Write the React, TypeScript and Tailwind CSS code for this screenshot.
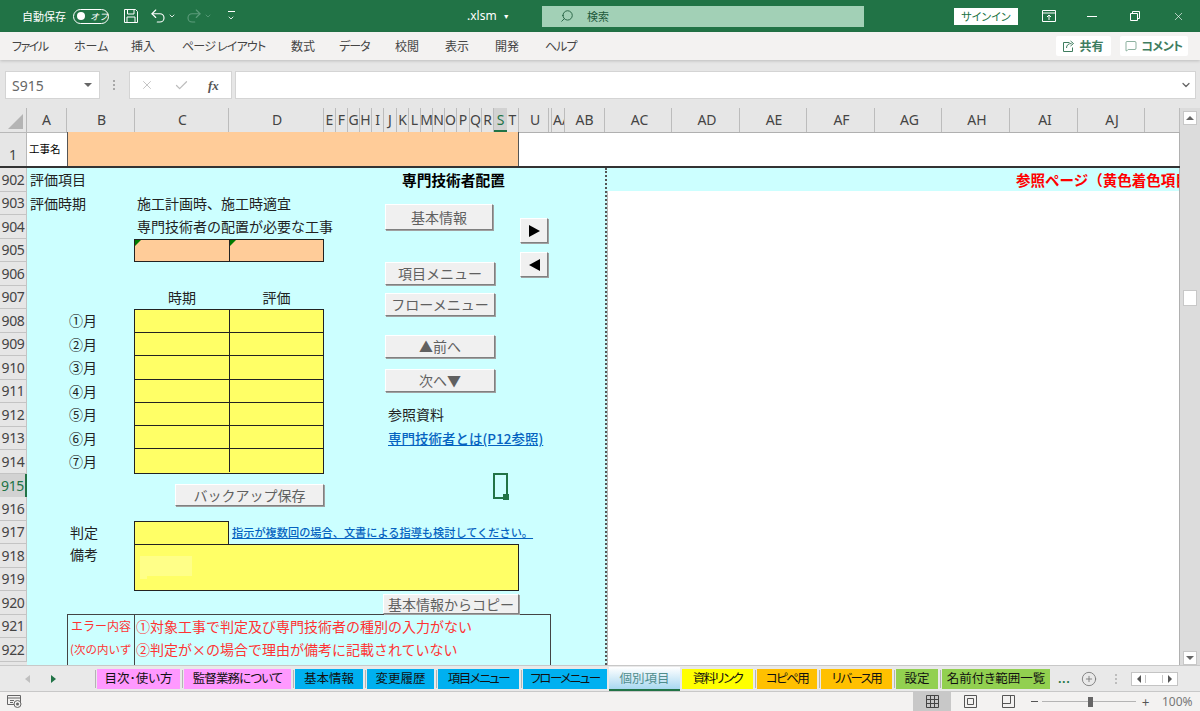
import { ChevronDown, Check, X, Search, Undo2, Redo2, CirclePlus, MessageSquare } from "lucide-react";

const ribbonTabs = [
  { label: "ファイル", w: "w-[62px] tracking-[-1.5px]" },
  { label: "ホーム", w: "w-[57px]" },
  { label: "挿入", w: "w-[51px]" },
  { label: "ページ レイアウト", w: "w-[109px] tracking-[-0.8px]" },
  { label: "数式", w: "w-[48px]" },
  { label: "データ", w: "w-[56px] tracking-[-1px]" },
  { label: "校閲", w: "w-[50px]" },
  { label: "表示", w: "w-[50px]" },
  { label: "開発", w: "w-[50px]" },
  { label: "ヘルプ", w: "w-[40px] tracking-[-1px]" },
];

const columns = [
  { label: "A", w: "w-[40px]" },
  { label: "B", w: "w-[68px] pl-[2px]" },
  { label: "C", w: "w-[94px] pl-[2px]" },
  { label: "D", w: "w-[95px] pl-[2px]" },
  { label: "E", w: "w-[12px]" },
  { label: "F", w: "w-[12px]" },
  { label: "G", w: "w-[12px]" },
  { label: "H", w: "w-[12px]" },
  { label: "I", w: "w-[12px]" },
  { label: "J", w: "w-[13px]" },
  { label: "K", w: "w-[12px]" },
  { label: "L", w: "w-[12px]" },
  { label: "M", w: "w-[12px]" },
  { label: "N", w: "w-[12px]" },
  { label: "O", w: "w-[12px]" },
  { label: "P", w: "w-[13px]" },
  { label: "Q", w: "w-[12px]" },
  { label: "R", w: "w-[12px]" },
  { label: "S", w: "w-[13px]" },
  { label: "T", w: "w-[12px]" },
  { label: "U", w: "w-[30px] pl-[3px]" },
  { label: "", w: "w-[3px]" },
  { label: "AA", w: "w-[13px]" },
  { label: "AB", w: "w-[40px]" },
  { label: "AC", w: "w-[67px] pl-[3px]" },
  { label: "AD", w: "w-[68px] pl-[3px]" },
  { label: "AE", w: "w-[67px] pl-[2px]" },
  { label: "AF", w: "w-[68px] pl-[2px]" },
  { label: "AG", w: "w-[67px] pl-[3px]" },
  { label: "AH", w: "w-[68px] pl-[3px]" },
  { label: "AI", w: "w-[68px] pl-[3px]" },
  { label: "AJ", w: "w-[67px] pl-[2px]" },
  { label: "", w: "w-[35px]" },
];

const rowNumbers = Array.from({ length: 21 }, (_, i) => 902 + i);
const months = ["①月", "②月", "③月", "④月", "⑤月", "⑥月", "⑦月"];

const tabs = [
  { label: "目次･使い方", cls: "w-[83px] bg-[#ff99ff]" },
  { label: "監督業務について", cls: "w-[107px] bg-[#ff99ff] tracking-[-0.9px]" },
  { label: "基本情報", cls: "w-[68px] bg-[#00b0f0]" },
  { label: "変更履歴", cls: "w-[67px] bg-[#00b0f0]" },
  { label: "項目メニュー", cls: "w-[81px] bg-[#00b0f0] tracking-[-1.5px]" },
  { label: "フローメニュー", cls: "w-[84px] bg-[#00b0f0] tracking-[-1.5px]" },
];
const tabsAfter = [
  { label: "資料リンク", cls: "w-[71px] bg-[#ffff00] tracking-[-1.6px]" },
  { label: "コピペ用", cls: "w-[60px] bg-[#ffc000] tracking-[-1.6px]" },
  { label: "リバース用", cls: "w-[71px] bg-[#ffc000] tracking-[-1.6px]" },
  { label: "設定", cls: "w-[42px] bg-[#92d050]" },
  { label: "名前付き範囲一覧", cls: "w-[108px] bg-[#92d050]" },
];

const sheetBtn =
  "absolute flex items-center justify-center bg-[#f0f0f0] border border-t-white border-l-white border-r-[#808080] border-b-[#808080] shadow-[1px_1px_0_#a0a0a0] text-[14px] text-[#606060] whitespace-nowrap";

function TitleBar() {
  return (
    <div className="flex h-[32px] shrink-0 items-center bg-[#217346] text-white">
      <span className="ml-[22px] w-[44px] text-[11px] whitespace-nowrap [font-feature-settings:'palt']">自動保存</span>
      <div className="ml-[7px] flex h-[15px] w-[36px] items-center rounded-full border border-white pl-[3px]">
        <span className="h-[8px] w-[8px] rounded-full bg-white" />
        <span className="ml-[5px] text-[9px] italic leading-none">オフ</span>
      </div>
      <svg className="ml-[14px]" width="16" height="16" viewBox="0 0 16 16" fill="none" stroke="white" strokeWidth="1">
        <path d="M1.5 1.5h11l2 2v11h-13z" />
        <path d="M4.5 1.5v4.5h6.5v-4.5" />
        <path d="M4 14.5v-5.5h8v5.5" />
      </svg>
      <Undo2 className="ml-[10px]" size={18} strokeWidth={1.5} />
      <ChevronDown className="ml-[1px]" size={8} strokeWidth={2.5} />
      <Redo2 className="ml-[9px] text-[#5c9c7b]" size={18} strokeWidth={1.5} />
      <ChevronDown className="ml-[1px] text-[#5c9c7b]" size={8} strokeWidth={2.5} />
      <div className="ml-[15px] flex w-[8px] flex-col items-center">
        <span className="mb-[2px] h-px w-[7px] bg-white" />
        <ChevronDown size={8} strokeWidth={2.5} />
      </div>
      <span className="ml-[232px] w-[75px] text-[12px] whitespace-nowrap font-['Noto_Sans',sans-serif]">
        .xlsm
        <span className="ml-[6px] text-[7px] align-[1px]">▼</span>
      </span>
      <div className="flex h-[21px] w-[322px] items-center bg-[#a2d0b6] text-[#1e5a3c]">
        <Search className="ml-[18px] -scale-x-100" size={14} strokeWidth={1.5} />
        <span className="ml-[13px] text-[11px]">検索</span>
      </div>
      <div className="ml-[90px] flex h-[17px] w-[64px] items-center justify-center bg-white text-[11px] text-[#217346] [font-feature-settings:'palt']">
        サインイン
      </div>
      <svg className="ml-[24px]" width="14" height="12" viewBox="0 0 14 12" fill="none" stroke="white" strokeWidth="1">
        <path d="M.5 .5h13v11h-13z" />
        <path d="M.5 3h13" />
        <path d="M7 10v-5M5 7l2-2 2 2" />
      </svg>
      <span className="ml-[31px] h-px w-[10px] bg-white" />
      <svg className="ml-[33px]" width="10" height="10" viewBox="0 0 10 10" fill="none" stroke="white" strokeWidth="1">
        <path d="M.5 2.5h7v7h-7z" />
        <path d="M2.5 2.5v-2h7v7h-2" />
      </svg>
      <X className="ml-[32px]" size={13} strokeWidth={1.2} />
    </div>
  );
}

function RibbonTabs() {
  return (
    <div className="relative z-10 flex h-[28px] shrink-0 items-center bg-[#f3f2f1] pl-[12px] shadow-[0_1px_3px_rgba(0,0,0,0.18)]">
      {ribbonTabs.map((tab) => (
        <span key={tab.label} className={`${tab.w} text-[12px] text-[#444] whitespace-pre [font-feature-settings:'palt']`}>
          {tab.label}
        </span>
      ))}
      <div className="ml-auto flex items-center gap-[9px] pr-[12px]">
        <div className="flex h-[20px] w-[55px] items-center justify-center gap-[4px] rounded-[2px] bg-white text-[12px] font-bold text-[#3f7d5f]">
          <svg width="12" height="12" viewBox="0 0 12 12" fill="none" stroke="#3f7d5f" strokeWidth="1">
            <path d="M6.5 2.5h-6v9h9v-4" />
            <path d="M3.5 8c0-3 2-4.500 5-4.500M7.500 1l3 2.500-3 2.500" />
          </svg>
          共有
        </div>
        <div className="flex h-[20px] w-[68px] items-center justify-center gap-[4px] rounded-[2px] bg-white text-[12px] font-bold tracking-[-0.5px] text-[#3f7d5f] [font-feature-settings:'palt']">
          <MessageSquare size={12} strokeWidth={1.2} />
          コメント
        </div>
      </div>
    </div>
  );
}

function FormulaBar() {
  return (
    <div className="flex h-[48px] shrink-0 items-center bg-[#e6e6e6] pl-[5px] pt-[2px]">
      <div className="flex h-[28px] w-[95px] items-center justify-between border border-[#d4d4d4] bg-white pl-[6px] pr-[7px] font-['Noto_Sans',sans-serif] text-[14px] text-[#666]">
        S915
        <span className="h-0 w-0 border-x-[4px] border-t-[4px] border-x-transparent border-t-[#666]" />
      </div>
      <div className="ml-[13px] flex w-[3px] flex-col gap-[2px]">
        <span className="h-[2px] w-[2px] bg-[#a8a8a8]" />
        <span className="h-[2px] w-[2px] bg-[#a8a8a8]" />
        <span className="h-[2px] w-[2px] bg-[#a8a8a8]" />
      </div>
      <div className="ml-[13px] flex h-[28px] w-[103px] items-center border border-[#d4d4d4] bg-white text-[#bdbdbd]">
        <X className="ml-[10px]" size={14} strokeWidth={1.5} />
        <Check className="ml-[20px]" size={15} strokeWidth={2} />
        <span className="ml-[19px] font-['Liberation_Serif',serif] text-[13px] font-bold italic leading-none text-[#555]">fx</span>
      </div>
      <div className="ml-[3px] flex h-[28px] w-[961px] items-center justify-end border border-[#d4d4d4] bg-white pr-[3px]">
        <ChevronDown className="text-[#666]" size={12} strokeWidth={2.5} />
      </div>
    </div>
  );
}

function ColumnHeaders() {
  return (
    <div className="flex h-[24px] bg-[#e6e6e6] font-['Noto_Sans',sans-serif] text-[14px] leading-[24px] text-[#444]">
      <div className="flex w-[27px] items-end justify-end border-r border-[#b8b8b8] pb-[3px] pr-[3px]">
        <span className="h-0 w-0 border-b-[15px] border-l-[15px] border-b-[#b4b4b4] border-l-transparent" />
      </div>
      {columns.map((col, i) =>
        col.label === "S" ? (
          <div key={i} className={`${col.w} flex justify-center border-b-2 border-[#217346] bg-[#d2d2d2] text-[#217346]`}>
            {col.label}
          </div>
        ) : col.label === "AA" ? (
          <div key={i} className={`${col.w} overflow-hidden whitespace-nowrap border-r border-[#bcbcbc] pl-[1px]`}>
            {col.label}
          </div>
        ) : (
          <div key={i} className={`${col.w} flex justify-center border-r border-[#bcbcbc]`}>
            {col.label}
          </div>
        ),
      )}
    </div>
  );
}

function RowOne() {
  return (
    <div className="flex h-[36px] border-b-2 border-b-[#333]">
      <div className="flex w-[27px] items-end justify-center border-r border-t border-[#b8b8b8] bg-[#e6e6e6] font-['Noto_Sans',sans-serif] text-[14px] leading-[22px] text-[#444]">
        1
      </div>
      <div className="flex w-[40px] items-center border-t border-[#b8b8b8] bg-white pb-[2px] pl-[2px] text-[10.5px] text-black">工事名</div>
      <div className="w-[452px] border-x border-[#555] bg-[#ffcc99]" />
      <div className="w-[661px] border-r border-t border-[#b0b0b0] bg-white" />
    </div>
  );
}

function RowHeaders() {
  return (
    <div className="h-[497px] w-[27px] shrink-0 overflow-hidden bg-[#e6e6e6] font-['Noto_Sans',sans-serif] text-[14px] tracking-[-0.3px] text-[#444]">
      {rowNumbers.map((n) =>
        n === 915 ? (
          <div key={n} className="flex h-[23.5px] items-center justify-center border-r-2 border-[#217346] bg-[#d2d2d2] text-[#217346]">
            {n}
          </div>
        ) : (
          <div key={n} className="flex h-[23.5px] items-center justify-center border-b border-r border-[#c4c4c4]">
            {n}
          </div>
        ),
      )}
    </div>
  );
}

function MainPane() {
  return (
    <div className="relative h-[497px] w-[580px] shrink-0 overflow-hidden border-r-2 border-dotted border-[#555] bg-[#ccffff] text-[14px] text-[#222]">
      <div className="grid grid-cols-[40px_68px_94px_95px_195px_32px_54px] grid-rows-[repeat(22,23.5px)] whitespace-nowrap">
        <div className="col-start-1 row-start-1 flex items-center pl-[3px]">評価項目</div>
        <div className="col-start-5 row-start-1 flex items-center pl-[78px] text-[14.7px] font-bold text-black">専門技術者配置</div>
        <div className="col-start-1 row-start-2 flex items-center pl-[3px]">評価時期</div>
        <div className="col-start-3 col-span-2 row-start-2 flex items-center pl-[2px]">施工計画時、施工時適宜</div>
        <div className="col-start-3 col-span-3 row-start-3 flex items-center pl-[2px]">専門技術者の配置が必要な工事</div>

        <div className="col-start-3 col-span-2 row-start-4 -ml-px grid grid-cols-[95px_1fr] border border-[#222] bg-[#ffcc99]">
          <div className="border-r border-[#222]">
            <div className="h-0 w-0 border-r-[6px] border-t-[6px] border-r-transparent border-t-[#007a00]" />
          </div>
          <div>
            <div className="h-0 w-0 border-r-[6px] border-t-[6px] border-r-transparent border-t-[#007a00]" />
          </div>
        </div>

        <div className="col-start-3 row-start-6 flex items-center justify-center">時期</div>
        <div className="col-start-4 row-start-6 flex items-center justify-center">評価</div>

        <div className="col-start-2 row-start-7 row-span-7 flex flex-col">
          {months.map((m) => (
            <div key={m} className="flex h-[23.5px] items-center pl-[2px]">
              {m}
            </div>
          ))}
        </div>
        <div className="col-start-3 col-span-2 row-start-7 row-span-7 -ml-px grid grid-cols-[95px_1fr] grid-rows-7 border border-[#222] bg-[#ffff66]">
          {months.map((m, i) => (
            <div key={m} className="contents">
              <div className={`border-r border-[#222] ${i < 6 ? "border-b" : ""}`} />
              <div className={`border-[#222] ${i < 6 ? "border-b" : ""}`} />
            </div>
          ))}
        </div>

        <div className="col-start-5 col-span-2 row-start-11 flex items-center pl-[64px]">参照資料</div>
        <div className="col-start-5 col-span-3 row-start-12 flex items-center pl-[64px] text-[13.5px] font-medium text-[#0563c1] underline">
          専門技術者とは(P12参照)
        </div>

        <div className="col-start-2 row-start-16 flex items-center pl-[3px]">判定</div>
        <div className="col-start-3 row-start-16 -ml-px border border-b-0 border-[#222] bg-[#ffff66]" />
        <div className="col-start-4 col-span-3 row-start-16 flex items-center pl-[3px] text-[11.2px] font-medium text-[#0563c1] underline">
          指示が複数回の場合、文書による指導も検討してください。
        </div>
        <div className="col-start-2 row-start-17 flex items-start pl-[3px]">備考</div>
        <div className="relative col-start-3 col-span-3 row-start-17 row-span-2 -ml-px border border-[#222] bg-[#ffff66]">
          <span className="absolute left-[5px] top-[11px] h-[20px] w-[52px] bg-[#ffff88]" />
          <span className="absolute left-[5px] top-[31px] h-[3px] w-[7px] bg-[#ffff88]" />
        </div>

        <div className="col-start-2 col-span-5 row-start-20 row-span-3 -mt-px grid grid-cols-[67px_1fr] grid-rows-[repeat(3,23.5px)] border border-[#444] text-[#ff3333]">
          <div className="flex items-center border-r border-[#444] pl-[3px] text-[12px]">エラー内容</div>
          <div className="flex items-center pl-[1px]">①対象工事で判定及び専門技術者の種別の入力がない</div>
          <div className="flex items-center border-r border-[#444] pl-[2px] text-[11.5px]">(次の内いず</div>
          <div className="flex items-center pl-[1px]">②判定が×の場合で理由が備考に記載されていない</div>
          <div className="border-r border-[#444]" />
        </div>
      </div>

      <div className={`${sheetBtn} left-[358px] top-[36px] h-[26px] w-[108px]`}>基本情報</div>
      <div className={`${sheetBtn} left-[493px] top-[50px] h-[25px] w-[28px]`}>
        <span className="h-0 w-0 border-y-[6px] border-l-[11px] border-y-transparent border-l-black" />
      </div>
      <div className={`${sheetBtn} left-[493px] top-[84px] h-[25px] w-[28px]`}>
        <span className="h-0 w-0 border-y-[6px] border-r-[11px] border-y-transparent border-r-black" />
      </div>
      <div className={`${sheetBtn} left-[358px] top-[94px] h-[23px] w-[110px]`}>項目メニュー</div>
      <div className={`${sheetBtn} left-[358px] top-[125px] h-[23px] w-[110px]`}>フローメニュー</div>
      <div className={`${sheetBtn} left-[358px] top-[167px] h-[23px] w-[110px] text-[#333]`}>▲前へ</div>
      <div className={`${sheetBtn} left-[358px] top-[201px] h-[23px] w-[110px] text-[#333]`}>次へ▼</div>
      <div className={`${sheetBtn} left-[148px] top-[316px] h-[22px] w-[149px]`}>バックアップ保存</div>
      <div className={`${sheetBtn} left-[356px] top-[426px] h-[20px] w-[136px]`}>基本情報からコピー</div>

      <div className="absolute left-[466px] top-[305px] h-[26px] w-[15px] border-2 border-[#217346]">
        <span className="absolute -bottom-[3px] -right-[3px] h-[6px] w-[6px] bg-[#217346]" />
      </div>
    </div>
  );
}

function RightPane() {
  return (
    <div className="flex h-[497px] w-[573px] flex-col border-r border-[#b0b0b0] bg-white">
      <div className="flex h-[23px] shrink-0 items-center overflow-hidden whitespace-nowrap bg-[#ccffff] pl-[409px] text-[14.5px] font-bold text-[#ff0000]">
        参照ページ（黄色着色項目
      </div>
      <div className="flex-1 border-l border-[#b8b8b8]" />
    </div>
  );
}

function VerticalScrollbar() {
  return (
    <div className="flex h-[557px] w-[20px] flex-col items-center bg-[#dcdcdc] px-[3px] pt-[3px]">
      <div className="flex h-[14px] w-[14px] items-center justify-center border border-[#c8c8c8] bg-white">
        <span className="h-0 w-0 border-x-[4px] border-b-[4px] border-x-transparent border-b-[#666]" />
      </div>
      <div className="mt-[165px] h-[16px] w-[14px] border border-[#c8c8c8] bg-white" />
      <div className="mt-auto flex h-[14px] w-[14px] items-center justify-center border border-[#c8c8c8] bg-white">
        <span className="h-0 w-0 border-x-[4px] border-t-[4px] border-x-transparent border-t-[#666]" />
      </div>
    </div>
  );
}

function TabSeparator() {
  return <span className="mx-[1.5px] h-[18px] w-px bg-[#b4b4b4]" />;
}

function SheetTabs() {
  return (
    <div className="flex h-[27px] shrink-0 items-center border-y border-y-[#c8c8c8] bg-[#e9e9e9] text-[12.5px] text-[#111] [font-feature-settings:'palt']">
      <div className="flex w-[93px] items-center">
        <span className="ml-[25px] h-0 w-0 border-y-[4px] border-r-[5px] border-y-transparent border-r-[#c0c0c0]" />
        <span className="ml-[21px] h-0 w-0 border-y-[4px] border-l-[5px] border-y-transparent border-l-[#217346]" />
      </div>
      <TabSeparator />
      {tabs.map((tab, i) => (
        <div key={tab.label} className="flex items-center">
          <div className={`${tab.cls} flex h-[20px] items-center justify-center whitespace-nowrap`}>{tab.label}</div>
          {i < tabs.length - 1 && <TabSeparator />}
        </div>
      ))}
      <div className="ml-[2px] flex h-[24px] w-[71px] items-center justify-center self-end border-b-2 border-[#217346] bg-gradient-to-b from-white to-[#a8d8f0] text-[#4f8d8d]">
        個別項目
      </div>
      <div className="ml-[2px] flex items-center">
        {tabsAfter.map((tab, i) => (
          <div key={tab.label} className="flex items-center">
            <div className={`${tab.cls} flex h-[20px] items-center justify-center whitespace-nowrap`}>{tab.label}</div>
            {i < tabsAfter.length - 1 && <TabSeparator />}
          </div>
        ))}
      </div>
      <span className="ml-[8px] w-[10px] text-[11px] font-bold leading-none tracking-[0.5px] text-[#217346]">...</span>
      <CirclePlus className="ml-[13px] text-[#777]" size={16} strokeWidth={1.3} />
      <div className="ml-[18px] flex w-[3px] flex-col gap-[2px]">
        <span className="h-[2px] w-[2px] bg-[#bdbdbd]" />
        <span className="h-[2px] w-[2px] bg-[#bdbdbd]" />
        <span className="h-[2px] w-[2px] bg-[#bdbdbd]" />
      </div>
      <div className="ml-[13px] flex h-[14px] w-[47px] items-center border border-[#c4c4c4] bg-white">
        <span className="flex w-[14px] justify-center border-r border-[#c4c4c4]">
          <span className="h-0 w-0 border-y-[4px] border-r-[4px] border-y-transparent border-r-[#555]" />
        </span>
        <span className="w-[16px]" />
        <span className="flex w-[15px] justify-center border-l border-[#c4c4c4]">
          <span className="h-0 w-0 border-y-[4px] border-l-[4px] border-y-transparent border-l-[#555]" />
        </span>
      </div>
    </div>
  );
}

function StatusBar() {
  return (
    <div className="flex h-[19px] shrink-0 items-center bg-[#f3f2f1] text-[#666]">
      <svg className="ml-[7px]" width="15" height="13" viewBox="0 0 15 13" fill="none" stroke="#666" strokeWidth="1">
        <path d="M.5 .5h13v9h-13zM.5 3h13M3 5.500h4M3 7.500h3" />
        <circle cx="10.500" cy="9" r="3.500" fill="#f3f2f1" />
        <circle cx="10.500" cy="9" r="1.500" fill="#666" stroke="none" />
      </svg>
      <div className="ml-[891px] flex h-full w-[38px] items-center justify-center bg-[#c8c8c8]">
        <svg width="13" height="13" viewBox="0 0 13 13" fill="none" stroke="#444" strokeWidth="1">
          <path d="M.5 .5h12v12h-12zM4.500 .5v12M8.500 .5v12M.5 4.500h12M.5 8.500h12" />
        </svg>
      </div>
      <div className="flex w-[38px] justify-center">
        <svg width="13" height="13" viewBox="0 0 13 13" fill="none" stroke="#555" strokeWidth="1">
          <path d="M.5 .5h12v12h-12zM3.500 3.500h6v6h-6z" />
        </svg>
      </div>
      <div className="flex w-[38px] justify-center">
        <svg width="13" height="13" viewBox="0 0 13 13" fill="none" stroke="#555" strokeWidth="1">
          <path d="M.5 .5h12v12h-12zM.5 8.500h8v-8" />
        </svg>
      </div>
      <span className="ml-[4px] h-px w-[7px] bg-[#555]" />
      <div className="relative ml-[4px] flex h-[12px] w-[94px] items-center">
        <span className="h-px w-full bg-[#b4b4b4]" />
        <span className="absolute left-[46px] top-px h-[10px] w-[5px] bg-[#666]" />
      </div>
      <span className="ml-[6px] w-[7px] text-center text-[13px] leading-none text-[#555]">+</span>
      <span className="ml-[13px] w-[32px] font-['Noto_Sans',sans-serif] text-[12px] text-[#777]">100%</span>
    </div>
  );
}

export default function App() {
  return (
    <div className="flex h-[711px] w-[1200px] flex-col overflow-hidden bg-white font-['Noto_Sans_CJK_JP','Noto_Sans',sans-serif]">
      <TitleBar />
      <RibbonTabs />
      <FormulaBar />
      <div className="flex h-[557px] shrink-0">
        <div className="w-[1180px]">
          <ColumnHeaders />
          <RowOne />
          <div className="flex">
            <RowHeaders />
            <MainPane />
            <RightPane />
          </div>
        </div>
        <VerticalScrollbar />
      </div>
      <SheetTabs />
      <StatusBar />
    </div>
  );
}
